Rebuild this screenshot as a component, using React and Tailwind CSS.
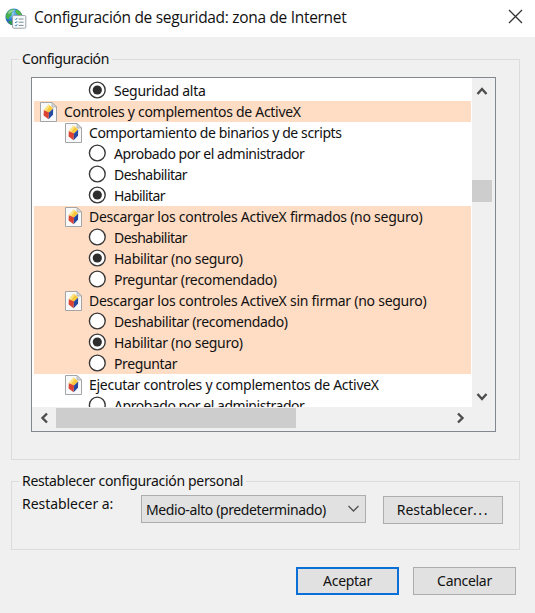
import React, { useState } from 'react';

const rows = [
  { type: 'radio', group: 'prev', label: 'Seguridad alta', checked: true, track: 'tracking-[-0.27px]' },
  { type: 'root', label: 'Controles y complementos de ActiveX', hot: true, track: 'tracking-[-0.3px]' },
  { type: 'group', label: 'Comportamiento de binarios y de scripts', track: 'tracking-[-0.39px]' },
  { type: 'radio', group: 'binarios', label: 'Aprobado por el administrador', track: 'tracking-[-0.46px]' },
  { type: 'radio', group: 'binarios', label: 'Deshabilitar', track: 'tracking-[-0.53px]' },
  { type: 'radio', group: 'binarios', label: 'Habilitar', checked: true, track: 'tracking-[-0.6px]' },
  { type: 'group', label: 'Descargar los controles ActiveX firmados (no seguro)', hot: true, track: 'tracking-[-0.26px]' },
  { type: 'radio', group: 'firmados', label: 'Deshabilitar', hot: true, track: 'tracking-[-0.53px]' },
  { type: 'radio', group: 'firmados', label: 'Habilitar (no seguro)', hot: true, checked: true, track: 'tracking-[-0.3px]' },
  { type: 'radio', group: 'firmados', label: 'Preguntar (recomendado)', hot: true, track: 'tracking-[-0.33px]' },
  { type: 'group', label: 'Descargar los controles ActiveX sin firmar (no seguro)', hot: true, track: 'tracking-[-0.26px]' },
  { type: 'radio', group: 'sinfirmar', label: 'Deshabilitar (recomendado)', hot: true, track: 'tracking-[-0.37px]' },
  { type: 'radio', group: 'sinfirmar', label: 'Habilitar (no seguro)', hot: true, checked: true, track: 'tracking-[-0.3px]' },
  { type: 'radio', group: 'sinfirmar', label: 'Preguntar', hot: true, track: 'tracking-[-0.37px]' },
  { type: 'group', label: 'Ejecutar controles y complementos de ActiveX', track: 'tracking-[-0.28px]' },
  { type: 'radio', group: 'ejecutar', label: 'Aprobado por el administrador', track: 'tracking-[-0.46px]' },
];

function GlobeIcon() {
  return (
    <svg width="22" height="22" viewBox="0 0 22 22" className="shrink-0">
      <defs>
        <radialGradient id="globe" cx="0.4" cy="0.3" r="0.75">
          <stop offset="0" stopColor="#8fd0f5" />
          <stop offset="0.5" stopColor="#2a80cf" />
          <stop offset="1" stopColor="#173f94" />
        </radialGradient>
      </defs>
      <circle cx="8.8" cy="9" r="8.4" fill="url(#globe)" />
      <path d="M2.2 4.4C4 1.8 6.6.8 9 1L8.4 3.2 6.8 4.6 6.4 7.4 4.4 9 3.6 11.4 1.4 10.4C.6 8.4 1 6 2.2 4.4Z" fill="#46b04a" />
      <path d="M11 1.4C14 2 16.4 4.4 17 7.4L13.6 7.2 11.4 5.4 10.4 3.4Z" fill="#52b83f" />
      <path d="M3 13.4L6 12.4 8 14.4 7.8 17.2C5.6 16.8 4 15.4 3 13.4Z" fill="#2f9a4d" />
      <path d="M3.4 4C5.4 2 8 1.4 10 2.2 8 3.6 5.4 4.4 3.4 6.4Z" fill="#fff" opacity="0.45" />
      <rect x="7.6" y="7.6" width="13.2" height="12.6" rx="1" fill="#fbfcfd" stroke="#9aa2a8" />
      <path d="M10 10.8l.9.9 1.4-1.8M10 14l.9.9 1.4-1.8M10 17.2l.9.9 1.4-1.8" fill="none" stroke="#2c83c4" strokeWidth="1" />
      <path d="M13.6 11h5M13.6 14.2h5M13.6 17.4h5" stroke="#7d8b93" strokeWidth="1" />
    </svg>
  );
}

function ItemIcon() {
  return (
    <svg width="17" height="20" viewBox="0 0 17 20" className="shrink-0">
      <path d="M.5.5H12L16.5 5V19.5H.5Z" fill="#f8f9fa" stroke="#a3a5a6" />
      <path d="M12 .5V5H16.5Z" fill="#d6d9db" stroke="#a3a5a6" strokeWidth="0.7" />
      <path d="M8.6 2.6L13.2 6.6 9 10.4 3.8 8Z" fill="#f9c93c" />
      <path d="M3.8 8L9 10.4 8.6 17.2 3.6 13.4Z" fill="#dc4332" />
      <path d="M13.2 6.6L9 10.4 8.6 17.2 13 12.8Z" fill="#254a9f" />
      <path d="M8.6 2.6L9.8 3.7 6.2 9 3.8 8Z" fill="#fde58a" />
    </svg>
  );
}

function Radio({ checked }) {
  return (
    <svg width="19" height="19" viewBox="0 0 19 19" className="shrink-0">
      <circle cx="9.3" cy="9" r="7.9" fill="#fff" stroke="#383838" strokeWidth="1.4" />
      {checked && <circle cx="9.3" cy="9" r="4.6" fill="#2d2d2d" />}
    </svg>
  );
}

function Row({ row, checked, onSelect }) {
  const pad = row.type === 'root' ? 'pl-[6px]' : row.type === 'group' ? 'pl-[31px]' : 'pl-[54px]';
  return (
    <div className={`flex h-[21px] shrink-0 items-center ${pad} ${row.hot ? 'bg-[#ffdcc4]' : 'bg-white'}`} onClick={onSelect}>
      {row.type === 'radio' ? <Radio checked={checked} /> : <ItemIcon />}
      <span className={`ml-[7px] whitespace-nowrap leading-[21px] ${row.track}`}>{row.label}</span>
    </div>
  );
}

function Arrow({ d }) {
  return (
    <svg width="20" height="20" viewBox="0 0 20 20" className="shrink-0">
      <path d={d} fill="none" stroke="#4d4d4d" strokeWidth="2.4" />
    </svg>
  );
}

function App() {
  const [selected, setSelected] = useState(() => {
    const initial = {};
    rows.forEach((row, i) => {
      if(row.checked) initial[row.group] = i;
    });
    return initial;
  });

  const select = (row, i) => {
    if(row.type !== 'radio') return;
    setSelected(prev => ({...prev, [row.group]: i}));
  }

  return (
    <div className="flex h-[613px] w-[535px] flex-col overflow-hidden bg-[#f0f0f0] font-['Noto_Sans',sans-serif] text-[14px] text-[#111]">
      <div className="flex h-[37px] shrink-0 items-center bg-white pl-[5px] pr-[12px]">
        <GlobeIcon />
        <h1 className="ml-[7px] flex-1 pb-[3px] font-['Open_Sans',sans-serif] text-[15.5px] leading-[29px] tracking-[-0.31px]">Configuración de seguridad: zona de Internet</h1>
        <button type="button" aria-label="Cerrar" className="mb-[5px]">
          <svg width="15" height="15" viewBox="0 0 15 15">
            <path d="M1 1L14 14M14 1L1 14" stroke="#333" strokeWidth="1.3" />
          </svg>
        </button>
      </div>

      <fieldset className="ml-[11px] mt-[10px] flex h-[413px] w-[509px] shrink-0 flex-col border border-[#dcdcdc] px-[7px]">
        <legend className="ml-0 px-[3px] leading-[24px] tracking-[-0.43px]">Configuración</legend>
        <div className="ml-[12px] mt-[6px] flex h-[355px] w-[465px] shrink-0 flex-col border border-[#828790] bg-[#f0f0f0]">
          <div className="flex h-[329px] shrink-0">
            <div className="flex h-[329px] w-[440px] shrink-0 flex-col overflow-hidden bg-white pl-[2px] pr-px pt-[2px]">
              {rows.map((row, i) => (
                <Row key={i} row={row} checked={selected[row.group] === i} onSelect={() => select(row, i)} />
              ))}
            </div>
            <div className="flex flex-1 flex-col">
              <Arrow d="M5.5 16L10 11 14.5 16" />
              <div className="mt-[82px] h-[22px] w-[20px] bg-[#cdcdcd]" />
              <div className="flex-1" />
              <Arrow d="M5.5 7L10 12 14.5 7" />
            </div>
          </div>
          <div className="mt-px flex h-[20px] items-center pl-[2px]">
            <Arrow d="M13 5.5L8.5 10 13 14.5" />
            <div className="ml-[2px] h-[20px] w-[240px] bg-[#cdcdcd]" />
            <div className="flex-1" />
            <div className="mr-[24px] h-[20px]">
              <Arrow d="M7 5.5L11.5 10 7 14.5" />
            </div>
          </div>
        </div>
      </fieldset>

      <fieldset className="ml-[11px] mt-[9px] flex h-[81px] w-[509px] shrink-0 border border-[#dcdcdc] px-[7px]">
        <legend className="px-[3px] leading-[24px] tracking-[-0.32px]">Restablecer configuración personal</legend>
        <div className="flex items-start">
          <span className="ml-[3px] w-[119px] leading-[22px] tracking-[-0.05px]">Restablecer a:</span>
          <button type="button" className="mt-[2px] flex h-[28px] w-[225px] items-center justify-between border border-[#adadad] bg-[#e1e1e1] pl-[4px] pr-[5px]">
            <span className="whitespace-nowrap tracking-[-0.39px]">Medio-alto (predeterminado)</span>
            <svg width="13" height="8" viewBox="0 0 13 8">
              <path d="M1.5 1L6.5 6 11.5 1" fill="none" stroke="#505050" strokeWidth="1.3" />
            </svg>
          </button>
          <button type="button" className="ml-[17px] mt-[3px] h-[28px] w-[120px] border border-[#adadad] bg-[#e1e1e1] pb-px tracking-[-0.05px]">
            Restablecer<span className="tracking-[1.7px]">...</span>
          </button>
        </div>
      </fieldset>

      <div className="mt-[17px] flex justify-end gap-[14px] pr-[19px]">
        <button type="button" className="h-[28px] w-[103px] border-2 border-[#0a70d8] bg-[#e1e1e1] pb-px tracking-[-0.3px]">Aceptar</button>
        <button type="button" className="h-[28px] w-[103px] border border-[#adadad] bg-[#e1e1e1] pb-px tracking-[-0.3px]">Cancelar</button>
      </div>
    </div>
  )
}

export default App;
